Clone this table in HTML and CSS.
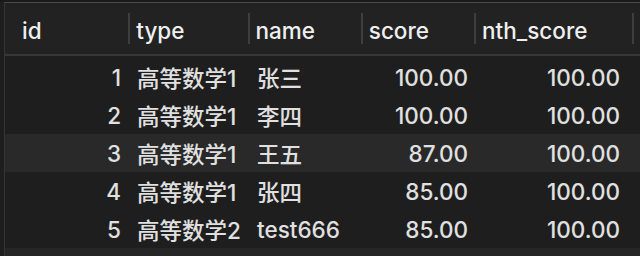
FILE: index.html
```html
<!DOCTYPE html>
<html lang="zh">
<head>
<meta charset="utf-8">
<link rel="stylesheet" href="styles.css">
</head>
<body>
<div class="grid">
  <div class="head">
    <div class="hc c-id first">id</div>
    <div class="hc c-type">type</div>
    <div class="hc c-name">name</div>
    <div class="hc c-score">score</div>
    <div class="hc c-nth">nth_score</div>
    <div class="hc c-end"></div>
  </div>
  <div class="body">
    <div class="row">
      <div class="c c-id num">1</div><div class="c c-type">高等数学1</div><div class="c c-name">张三</div><div class="c c-score num">100.00</div><div class="c c-nth num">100.00</div>
    </div>
    <div class="row">
      <div class="c c-id num">2</div><div class="c c-type">高等数学1</div><div class="c c-name">李四</div><div class="c c-score num">100.00</div><div class="c c-nth num">100.00</div>
    </div>
    <div class="row alt">
      <div class="c c-id num">3</div><div class="c c-type">高等数学1</div><div class="c c-name">王五</div><div class="c c-score num">87.00</div><div class="c c-nth num">100.00</div>
    </div>
    <div class="row">
      <div class="c c-id num">4</div><div class="c c-type">高等数学1</div><div class="c c-name">张四</div><div class="c c-score num">85.00</div><div class="c c-nth num">100.00</div>
    </div>
    <div class="row">
      <div class="c c-id num">5</div><div class="c c-type">高等数学2</div><div class="c c-name">test666</div><div class="c c-score num">85.00</div><div class="c c-nth num">100.00</div>
    </div>
  </div>
  <div class="foot"></div>
</div>
</body>
</html>
```
FILE: styles.css
```css
html, body {
  margin: 0;
  padding: 0;
  background: #1e1e1e;
  width: 640px;
  height: 256px;
  overflow: hidden;
}
body {
  font-family: Inter, "Noto Sans CJK SC", sans-serif;
  font-size: 22.5px;
  font-weight: 500;
  color: #e0e0e0;
  border-top: 2px solid #1a1a1a;
}
.grid {
  border-top: 1px solid #4a4a4a;
  margin-left: 4px;
  border-left: 1px solid #353535;
  height: 253px;
  display: flex;
  flex-direction: column;
}
.head {
  display: flex;
  height: 51px;
  background: #222222;
  border-bottom: 2px solid #383838;
  box-sizing: content-box;
  color: #efefef;
}
.hc {
  position: relative;
  display: flex;
  align-items: center;
  padding: 3px 0 0 8px;
  box-sizing: border-box;
}
.hc::before {
  content: "";
  position: absolute;
  left: 0;
  top: 10px;
  width: 2px;
  height: 31px;
  background: #3e3e3e;
}
.hc.first::before { display: none; }
.hc.first { padding-left: 17px; }
.c-id { width: 124px; }
.c-type { width: 120px; }
.c-name { width: 114px; }
.c-score { width: 114px; }
.c-nth { width: 159px; }
.c-end { width: 4px; }
.body {
  padding-top: 2px;
  display: flex;
  flex-direction: column;
}
.row {
  display: flex;
  height: 38px;
  align-items: center;
}
.row.alt { background: #292929; }
.c {
  box-sizing: border-box;
  padding-left: 8px;
  white-space: nowrap;
}
.c.num {
  text-align: right;
  padding-left: 0;
  padding-right: 9px;
}
.c-nth.num { padding-right: 16px; }
.c-id.num { padding-right: 8px; }
.foot {
  flex: 1;
  background: #262626;
  margin-top: 0;
}
```
